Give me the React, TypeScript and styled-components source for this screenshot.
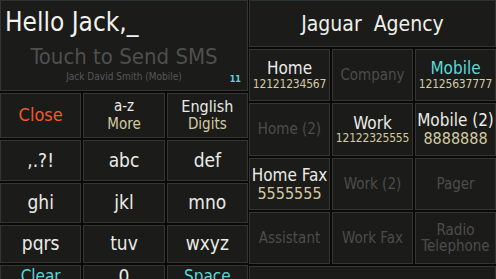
import React from "react";
import styled, { createGlobalStyle } from "styled-components";

const GlobalStyle = createGlobalStyle`
  html, body {
    margin: 0;
    padding: 0;
    background: #090909;
    overflow: hidden;
  }
  body {
    font-family: "DejaVu Sans Condensed", "DejaVu Sans", "Noto Sans", sans-serif;
  }
`;

type Tone = "normal" | "off" | "accent" | "warn";

const toneColor: Record<Tone, string> = {
  normal: "#ebebe6",
  off: "#4d4d4b",
  accent: "#5ad8d8",
  warn: "#f05a2a",
};

// layout
const Screen = styled.div`
  width: 496px;
  height: 279px;
  display: grid;
  grid-template-columns: 248px 1fr;
  column-gap: 1px;
  overflow: hidden;
  background: #090909;
`;

const Panel = styled.div`
  display: flex;
  flex-direction: column;
  gap: 2px;
  overflow: hidden;
`;

const Cell = styled.div`
  box-sizing: border-box;
  background: #1b1b1a;
  border: 1px solid #353533;
  display: flex;
  flex-direction: column;
  align-items: center;
  justify-content: center;
  text-align: center;
  overflow: hidden;
`;

// message area
const Composer = styled(Cell)`
  height: 91px;
  flex: none;
  position: relative;
  align-items: stretch;
  justify-content: flex-start;
  border-top-color: #2c3238;
`;

const Typed = styled.div`
  color: #f2f2ee;
  font-size: 26px;
  line-height: 30px;
  text-align: left;
  padding: 6px 0 0 4px;
`;

const Hint = styled.div`
  color: #4f4f4d;
  font-size: 22px;
  line-height: 24px;
  margin-top: 8px;
`;

const Recipient = styled.div`
  color: #585856;
  font-size: 10px;
  line-height: 12px;
  margin-top: 2px;
`;

const Counter = styled.span`
  position: absolute;
  right: 6px;
  bottom: 6px;
  color: #5ad8d8;
  font-size: 9px;
  font-weight: bold;
`;

// keypad
const Keypad = styled.div`
  display: grid;
  grid-template-columns: repeat(3, 1fr);
  grid-template-rows: 45px 41px 40px 38px 24px;
  gap: 2px;
`;

const Key = styled(Cell)<{ $tone?: Tone; $size?: number }>`
  color: ${(p) => toneColor[p.$tone ?? "normal"]};
  font-size: ${(p) => p.$size ?? 19}px;
  line-height: 1.15;
`;

const SubLabel = styled.span`
  color: #d4cba3;
  font-size: 15px;
  line-height: 1.15;
`;

// contact side
const Title = styled(Cell)`
  height: 47px;
  flex: none;
  color: #efefea;
  font-size: 21px;
  white-space: pre;
  border-top-color: #2c3238;
`;

const Numbers = styled.div`
  display: grid;
  grid-template-columns: repeat(3, 1fr);
  grid-template-rows: 52px 53px 52px 52px 40px;
  gap: 2px;
`;

const Slot = styled(Cell)<{ $tone?: Tone; $wide?: boolean }>`
  color: ${(p) => toneColor[p.$tone ?? "normal"]};
  font-size: ${(p) => (p.$tone === "off" ? 15 : 17)}px;
  line-height: 1.1;
  grid-column: ${(p) => (p.$wide ? "1 / -1" : "auto")};
`;

const Phone = styled.span<{ $big?: boolean }>`
  color: #d4cba3;
  font-size: ${(p) => (p.$big ? 16 : 12)}px;
  letter-spacing: ${(p) => (p.$big ? 0 : -0.2)}px;
  line-height: 1.1;
`;

const keys: { label: string; sub?: string; tone?: Tone; size?: number }[] = [
  { label: "Close", tone: "warn", size: 18 },
  { label: "a-z", sub: "More", size: 15 },
  { label: "English", sub: "Digits", size: 16 },
  { label: ",.?!" },
  { label: "abc" },
  { label: "def" },
  { label: "ghi" },
  { label: "jkl" },
  { label: "mno" },
  { label: "pqrs" },
  { label: "tuv" },
  { label: "wxyz" },
  { label: "Clear", tone: "accent", size: 17 },
  { label: "0" },
  { label: "Space", tone: "accent", size: 17 },
];

const slots: { label: string; phone?: string; tone?: Tone; big?: boolean }[] = [
  { label: "Home", phone: "12121234567" },
  { label: "Company", tone: "off" },
  { label: "Mobile", phone: "12125637777", tone: "accent" },
  { label: "Home (2)", tone: "off" },
  { label: "Work", phone: "12122325555" },
  { label: "Mobile (2)", phone: "8888888", big: true },
  { label: "Home Fax", phone: "5555555", big: true },
  { label: "Work (2)", tone: "off" },
  { label: "Pager", tone: "off" },
  { label: "Assistant", tone: "off" },
  { label: "Work Fax", tone: "off" },
  { label: "Radio Telephone", tone: "off" },
];

const App = () => {
  return (
    <>
      <GlobalStyle />
      <Screen>
        <Panel>
          <Composer>
            <Typed>Hello Jack,_</Typed>
            <Hint>Touch to Send SMS</Hint>
            <Recipient>Jack David Smith (Mobile)</Recipient>
            <Counter>11</Counter>
          </Composer>
          <Keypad>
            {keys.map((k) => (
              <Key key={k.label} $tone={k.tone} $size={k.size}>
                {k.label}
                {k.sub && <SubLabel>{k.sub}</SubLabel>}
              </Key>
            ))}
          </Keypad>
        </Panel>
        <Panel>
          <Title>{"Jaguar  Agency"}</Title>
          <Numbers>
            {slots.map((s) => (
              <Slot key={s.label} $tone={s.tone}>
                {s.label}
                {s.phone && <Phone $big={s.big}>{s.phone}</Phone>}
              </Slot>
            ))}
            <Slot $wide />
          </Numbers>
        </Panel>
      </Screen>
    </>
  );
};

export default App;
